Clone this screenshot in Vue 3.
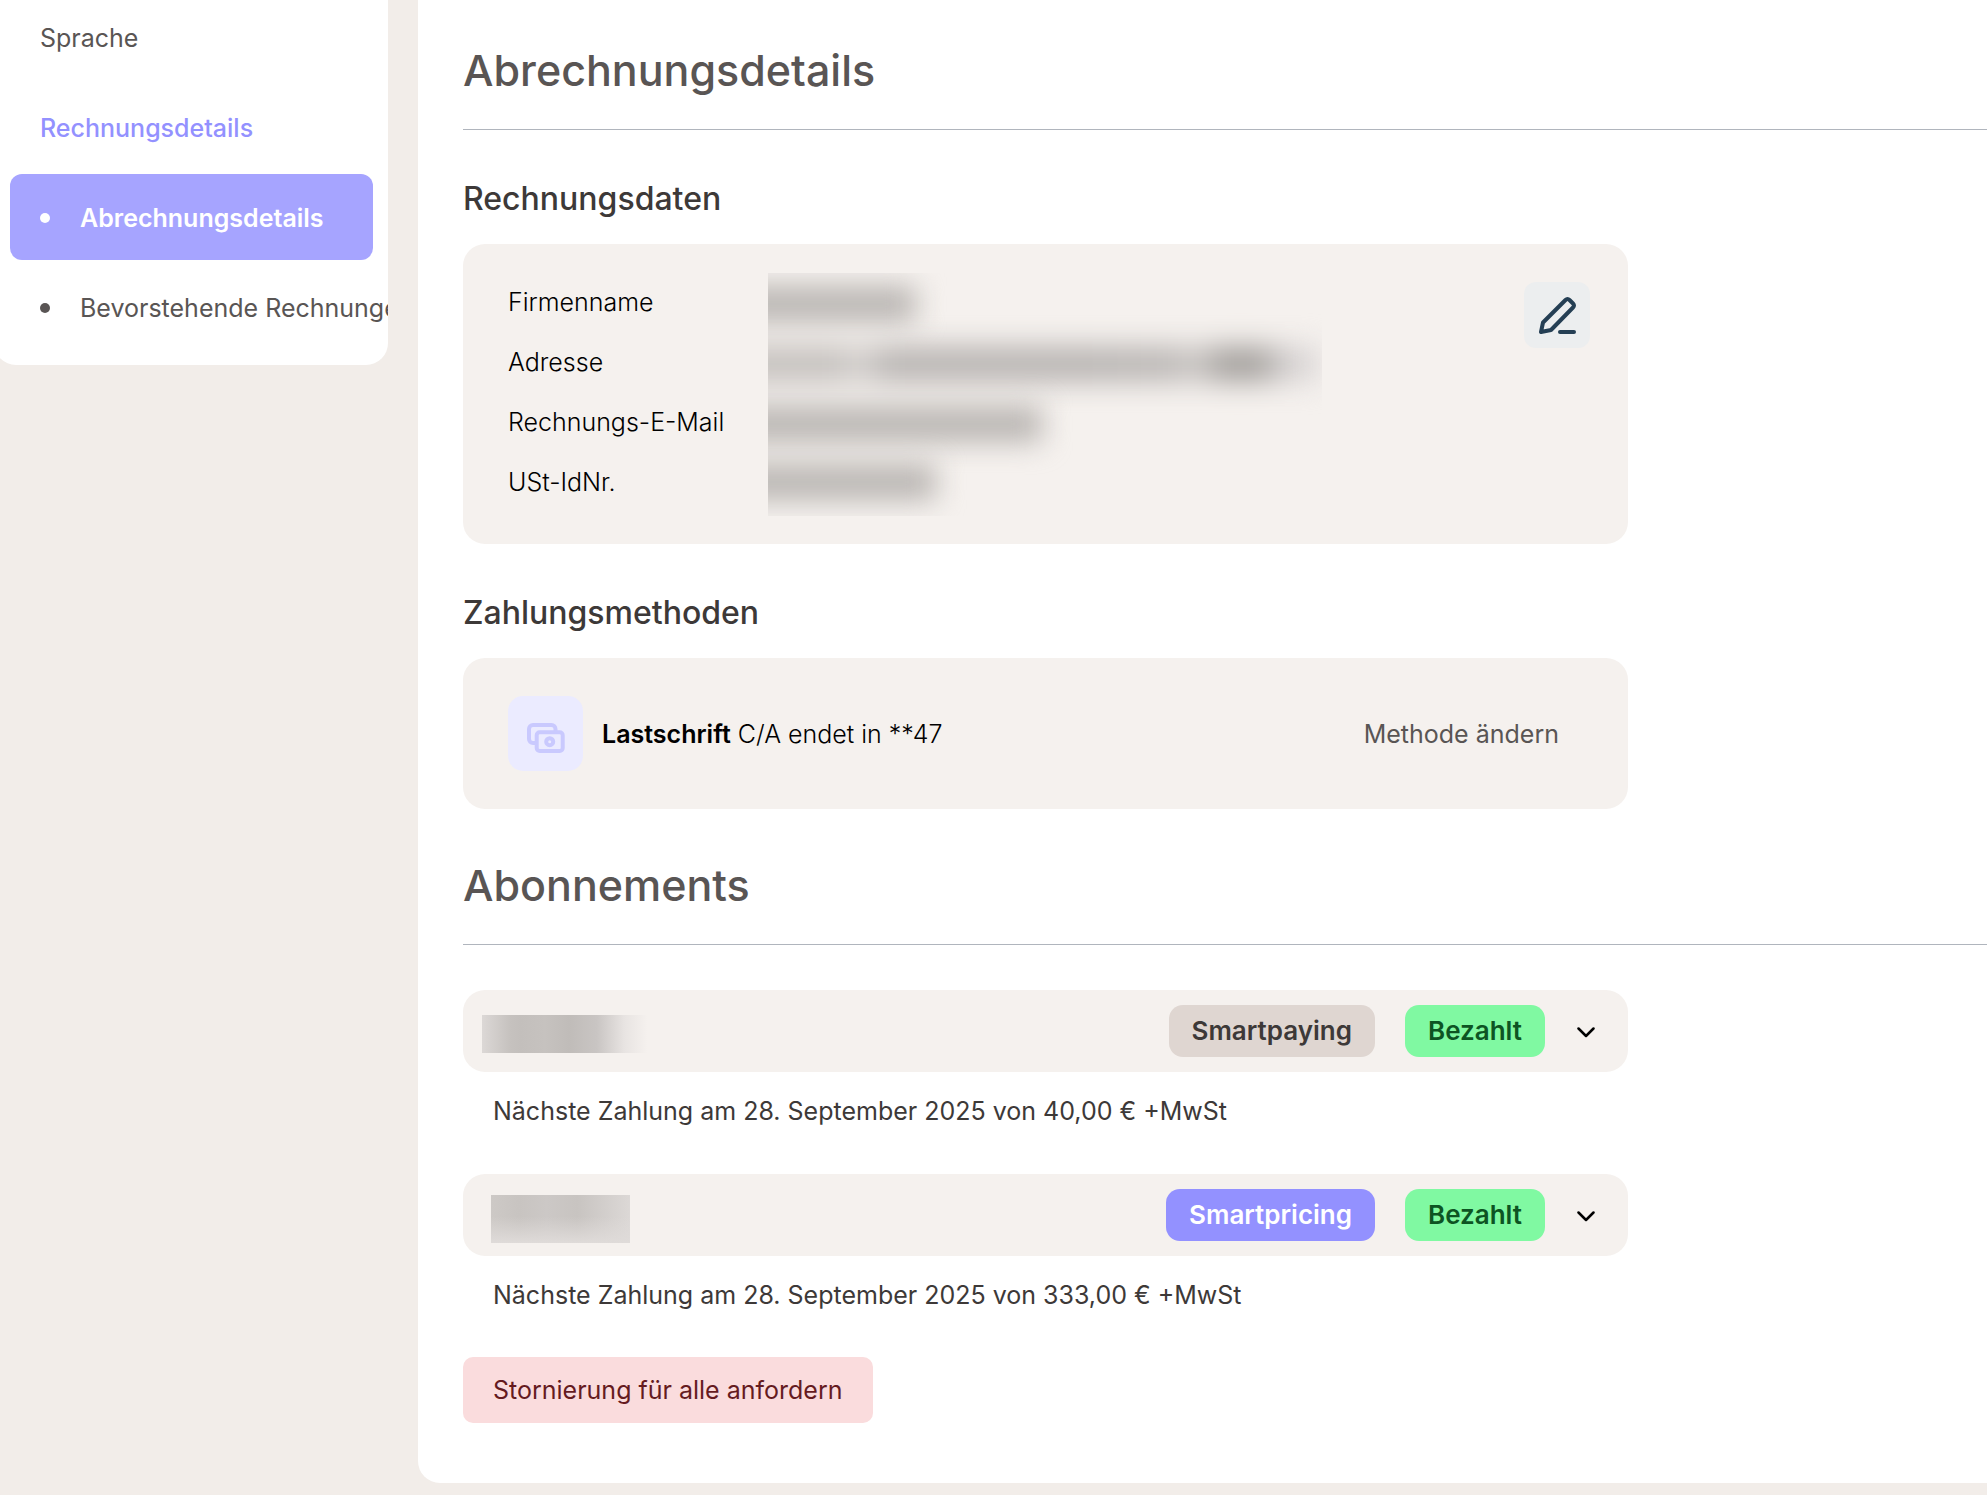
<script setup>
const details = [
  { label: 'Firmenname', mask: 'company' },
  { label: 'Adresse', mask: 'address' },
  { label: 'Rechnungs-E-Mail', mask: 'email' },
  { label: 'USt-IdNr.', mask: 'vat' },
]

const subscriptions = [
  { product: 'Smartpaying', tone: 'neutral', status: 'Bezahlt', mask: 'first', next: 'Nächste Zahlung am 28. September 2025 von 40,00 € +MwSt' },
  { product: 'Smartpricing', tone: 'violet', status: 'Bezahlt', mask: 'second', next: 'Nächste Zahlung am 28. September 2025 von 333,00 € +MwSt' },
]
</script>

<template>
  <div class="page">
    <nav class="sidebar">
      <a class="item" href="#sprache">Sprache</a>
      <a class="item section" href="#rechnungsdetails">Rechnungsdetails</a>
      <a class="item active" href="#abrechnungsdetails" aria-current="page"><i class="dot"></i>Abrechnungsdetails</a>
      <a class="item" href="#bevorstehend"><i class="dot"></i>Bevorstehende Rechnungen</a>
    </nav>

    <main class="content">
      <h1>Abrechnungsdetails</h1>

      <h2>Rechnungsdaten</h2>
      <section class="card billing">
        <dl>
          <div v-for="d in details" :key="d.label" class="detail">
            <dt>{{ d.label }}</dt>
            <dd :class="d.mask"><span class="smear"></span></dd>
          </div>
        </dl>
        <button class="edit" type="button" aria-label="Bearbeiten">
          <svg width="37" height="37" viewBox="0 0 37 37" fill="none" stroke="#253f54" stroke-width="4" stroke-linejoin="round" stroke-linecap="round">
            <path d="M2 35 4 25.500 26.500 3Q28.500 1 30.500 3L34 6.500Q36 8.500 34 10.500L12 33Z" />
            <path d="M21 35H35" />
          </svg>
        </button>
      </section>

      <h2>Zahlungsmethoden</h2>
      <section class="card payment">
        <span class="method-icon">
          <svg width="38" height="38" viewBox="0 -8 38 38" fill="none" stroke="#c9c9fe" stroke-width="4" stroke-linejoin="round">
            <path d="M28.500 9V6a4 4 0 0 0-4-4H6a4 4 0 0 0-4 4v10a4 4 0 0 0 4 4h3" />
            <rect x="9.700" y="9.300" width="26" height="18.700" rx="3" />
            <circle cx="22.700" cy="18.700" r="3.500" />
          </svg>
        </span>
        <p><strong>Lastschrift</strong> C/A endet in **47</p>
        <button class="change" type="button">Methode ändern</button>
      </section>

      <h1 class="spaced">Abonnements</h1>

      <ul class="subscriptions">
        <li v-for="s in subscriptions" :key="s.product">
          <div class="card subscription">
            <span class="name" :class="s.mask"></span>
            <span class="badge" :class="s.tone">{{ s.product }}</span>
            <span class="badge green">{{ s.status }}</span>
            <button class="toggle" type="button" aria-label="Aufklappen">
              <svg width="18" height="13" viewBox="0 0 18 13" fill="none" stroke="#000" stroke-width="2.500" stroke-linecap="round" stroke-linejoin="round">
                <path d="M1.500 3.500 9 11 16.500 3.500" />
              </svg>
            </button>
          </div>
          <p class="next">{{ s.next }}</p>
        </li>
      </ul>

      <button class="cancel" type="button">Stornierung für alle anfordern</button>
    </main>
  </div>
</template>

<style>
body {
  margin: 0;
  background: #f2ede9;
}
</style>

<style scoped>
.page {
  display: flex;
  align-items: flex-start;
  gap: 30px;
  min-height: 100vh;
  overflow: hidden;
  box-sizing: border-box;
  padding-bottom: 12px;
  font: 400 25px/38px Inter, "Liberation Sans", sans-serif;
  color: #000;
}

h1, h2, p, dl, dd, ul {
  margin: 0;
  padding: 0;
}

button {
  border: 0;
  padding: 0;
  background: none;
  font: inherit;
  cursor: pointer;
}

.sidebar {
  display: flex;
  flex-direction: column;
  flex: 0 0 394px;
  gap: 4px;
  box-sizing: border-box;
  margin: -6px 0 0 -6px;
  padding: 0 15px 15px 16px;
  overflow: hidden;
  border-radius: 0 0 22px 22px;
  background: #fff;
}

.item {
  display: flex;
  align-items: center;
  box-sizing: border-box;
  height: 86px;
  padding: 2px 0 0 30px;
  border-radius: 12px;
  color: #595554;
  text-decoration: none;
  white-space: nowrap;
}

.item.section {
  color: #9391ff;
  font-weight: 500;
}

.item.active {
  background: #a6a4ff;
  color: #fff;
  font-weight: 600;
}

.dot {
  flex: none;
  width: 10px;
  height: 10px;
  margin-right: 30px;
  border-radius: 50%;
  background: currentColor;
}

.content {
  flex: 1;
  min-width: 0;
  padding: 43px 0 60px 45px;
  border-radius: 0 0 0 22px;
  background: #fff;
}

h1 {
  padding-bottom: 32px;
  border-bottom: 1px solid #b0b5bd;
  color: #595554;
  font-size: 43px;
  font-weight: 500;
  line-height: 54px;
}

h1.spaced {
  margin-top: 49px;
}

h2 {
  margin: 48px 0 24px;
  color: #3d3938;
  font-size: 32px;
  font-weight: 500;
  line-height: 42px;
}

.card {
  display: flex;
  box-sizing: border-box;
  max-width: 1165px;
  border-radius: 22px;
  background: #f5f1ee;
}

.billing {
  align-items: flex-start;
  justify-content: space-between;
  padding: 28px 38px 32px 45px;
}

.detail {
  display: grid;
  grid-template-columns: 260px 554px;
  align-items: center;
  height: 60px;
}

dt {
  font-weight: 300;
}

dd {
  display: flex;
  align-items: center;
  box-sizing: border-box;
  height: 60px;
  padding-top: 4px;
  clip-path: inset(-40px 0 -40px 0);
}

dd.company {
  clip-path: inset(1px 0 -40px 0);
}

dd.vat {
  padding-top: 0;
  clip-path: inset(-40px 0 -4px 0);
}

.smear {
  height: 36px;
  margin-left: -40px;
  background: #b9b5b2;
  filter: blur(14px);
}

.company .smear {
  width: 188px;
}

.address .smear {
  width: 590px;
  background: linear-gradient(90deg, #c4c0bd 0 19%, #d6d2d0 22%, #b8b4b2 27% 60%, #bcb8b6 76%, #cecac8 79%, #a4a09d 84% 90%, #d8d4d4 95%);
}

.email .smear {
  width: 314px;
}

.vat .smear {
  width: 208px;
}

.edit {
  display: grid;
  place-items: center;
  width: 66px;
  height: 66px;
  margin-top: 10px;
  border-radius: 12px;
  background: #eceeef;
}

.payment {
  align-items: center;
  height: 151px;
  padding: 0 69px 0 45px;
}

.method-icon {
  display: grid;
  place-items: center;
  width: 75px;
  height: 75px;
  margin-right: 19px;
  border-radius: 15px;
  background: #ebebff;
}

.payment p {
  font-weight: 300;
}

.payment strong {
  font-weight: 600;
}

.change {
  margin-left: auto;
  color: #595554;
}

.subscriptions {
  display: grid;
  gap: 44px;
  margin-top: 45px;
  list-style: none;
}

.subscription {
  align-items: center;
  height: 82px;
  padding-right: 24px;
}

.name {
  margin-right: auto;
}

.name.first {
  width: 174px;
  height: 38px;
  margin-left: 19px;
  margin-top: 6px;
  background: linear-gradient(90deg, #dcd8d6, #c6c2bf 16%, #c3bfbc 22%, #c6c2bf 36%, #c0bcb9 50%, #c9c5c3 66%, #e8e4e2 82%, #f5f1ee 95%);
}

.name.second {
  width: 139px;
  height: 48px;
  margin-left: 28px;
  margin-top: 8px;
  background:
    linear-gradient(180deg, transparent 45%, #dfdbd9),
    linear-gradient(90deg, #cdc9c6, #c8c4c1 20%, #ccc8c6 40%, #c8c4c1 62%, #dcd8d6);
}

.badge {
  margin-right: 30px;
  padding: 0 23px;
  border-radius: 14px;
  font-size: 26px;
  font-weight: 600;
  line-height: 52px;
}

.badge.neutral {
  background: #dfd6d1;
  color: #3d3938;
}

.badge.violet {
  background: #9391ff;
  color: #fff;
}

.badge.green {
  margin-right: 23px;
  background: #80f9a2;
  color: #0d5423;
}

.toggle {
  display: grid;
  place-items: center;
  width: 36px;
  height: 36px;
}

.next {
  margin: 20px 0 0 30px;
  color: #3d3938;
}

.cancel {
  display: block;
  height: 66px;
  margin-top: 43px;
  padding: 0 30px;
  border-radius: 10px;
  background: #fadcdd;
  color: #651b1f;
}
</style>
